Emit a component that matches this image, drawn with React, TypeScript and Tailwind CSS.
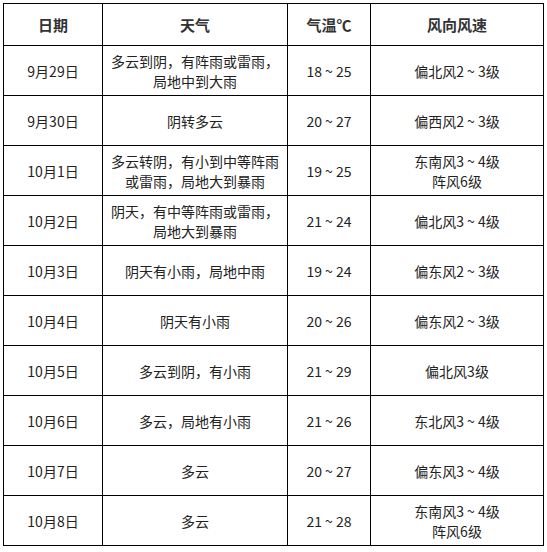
import React from "react";

const rows: [string, string[], string, string[]][] = [
  ["9月29日", ["多云到阴，有阵雨或雷雨，", "局地中到大雨"], "18～25", ["偏北风2～3级"]],
  ["9月30日", ["阴转多云"], "20～27", ["偏西风2～3级"]],
  ["10月1日", ["多云转阴，有小到中等阵雨", "或雷雨，局地大到暴雨"], "19～25", ["东南风3～4级", "阵风6级"]],
  ["10月2日", ["阴天，有中等阵雨或雷雨，", "局地大到暴雨"], "21～24", ["偏北风3～4级"]],
  ["10月3日", ["阴天有小雨，局地中雨"], "19～24", ["偏东风2～3级"]],
  ["10月4日", ["阴天有小雨"], "20～26", ["偏东风2～3级"]],
  ["10月5日", ["多云到阴，有小雨"], "21～29", ["偏北风3级"]],
  ["10月6日", ["多云，局地有小雨"], "21～26", ["东北风3～4级"]],
  ["10月7日", ["多云"], "20～27", ["偏东风3～4级"]],
  ["10月8日", ["多云"], "21～28", ["东南风3～4级", "阵风6级"]],
];

const fmt = (s: string) => s.replace(/～/g, " ~ ");

function Lines({ lines }: { lines: string[] }) {
  return (
    <>
      {lines.map((l, i) => (
        <React.Fragment key={i}>
          {i > 0 && <br />}
          {fmt(l)}
        </React.Fragment>
      ))}
    </>
  );
}

export default function App() {
  return (
    <div
      className="w-[547px] h-[552px] bg-white pl-[3px] pt-[3px] text-[#222] text-[14px]"
      style={{ fontFamily: '"Microsoft YaHei", "Noto Sans CJK SC", "Noto Sans", sans-serif' }}
    >
      <table className="border-collapse table-fixed w-[540px]">
        <colgroup>
          <col className="w-[99px]" />
          <col className="w-[185px]" />
          <col className="w-[83px]" />
          <col className="w-[173px]" />
        </colgroup>
        <thead>
          <tr className="h-[42px]">
            {["日期", "天气", "气温℃", "风向风速"].map((h) => (
              <th key={h} className="border border-black text-center font-bold text-[15px] text-[#333] p-0 leading-[20px]">
                {h}
              </th>
            ))}
          </tr>
        </thead>
        <tbody>
          {rows.map(([d, w, t, wind]) => (
            <tr key={d} className="h-[50px]">
              <td className="border border-black text-center p-0 leading-[20px]">{d}</td>
              <td className="border border-black text-center p-0 leading-[20px]">
                <Lines lines={w} />
              </td>
              <td className="border border-black text-center p-0 leading-[20px]">{fmt(t)}</td>
              <td className="border border-black text-center p-0 leading-[20px]">
                <Lines lines={wind} />
              </td>
            </tr>
          ))}
        </tbody>
      </table>
    </div>
  );
}
